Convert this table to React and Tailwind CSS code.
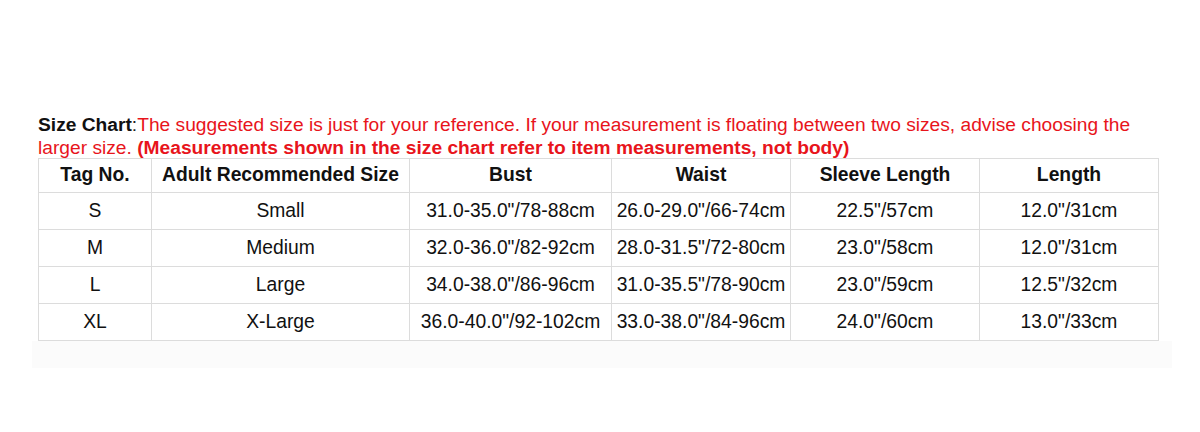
const headers = [
  "Tag No.",
  "Adult Recommended Size",
  "Bust",
  "Waist",
  "Sleeve Length",
  "Length",
];

const widths = ["w-[113px]", "w-[258px]", "w-[202px]", "w-[179px]", "w-[189px]", "w-[179px]"];

const rows = [
  ["S", "Small", "31.0-35.0\"/78-88cm", "26.0-29.0\"/66-74cm", "22.5\"/57cm", "12.0\"/31cm"],
  ["M", "Medium", "32.0-36.0\"/82-92cm", "28.0-31.5\"/72-80cm", "23.0\"/58cm", "12.0\"/31cm"],
  ["L", "Large", "34.0-38.0\"/86-96cm", "31.0-35.5\"/78-90cm", "23.0\"/59cm", "12.5\"/32cm"],
  ["XL", "X-Large", "36.0-40.0\"/92-102cm", "33.0-38.0\"/84-96cm", "24.0\"/60cm", "13.0\"/33cm"],
];

function App() {
  return (
    <div className="w-[1200px] h-[432px] bg-white font-['Liberation_Sans',Arial,sans-serif] text-[#111] overflow-hidden">
      <div className="pt-[113px] pl-[38px] w-[1164px]">
        <div className="text-[19.2px] leading-[23px] w-[1120px] whitespace-nowrap">
          <p>
            <span className="font-bold text-[#111]">Size Chart</span>
            <span className="text-[#222]">:</span>
            <span className="text-[#e8141b]">
              The suggested size is just for your reference. If your measurement is floating between two sizes, advise
              choosing the
            </span>
          </p>
          <p>
            <span className="text-[#e8141b]">larger size. </span>
            <span className="font-bold text-[#e8141b]">
              (Measurements shown in the size chart refer to item measurements, not body)
            </span>
          </p>
        </div>
        <table className="-mt-[1px] border-collapse table-fixed w-[1120px] bg-white text-[19.3px]">
          <thead>
            <tr className="h-[34px]">
              {headers.map((h, i) => (
                <th key={h} className={`${widths[i]} border border-[#dcdcdc] font-bold text-center p-0`}>
                  {h}
                </th>
              ))}
            </tr>
          </thead>
          <tbody>
            {rows.map((r) => (
              <tr key={r[0]} className="h-[37px]">
                {r.map((c, i) => (
                  <td key={i} className="border border-[#dcdcdc] text-center p-0">
                    {c}
                  </td>
                ))}
              </tr>
            ))}
          </tbody>
        </table>
      </div>
      <div className="ml-[32px] w-[1140px] h-[27px] bg-[#fbfbfb]" />
    </div>
  );
}

export default App;
